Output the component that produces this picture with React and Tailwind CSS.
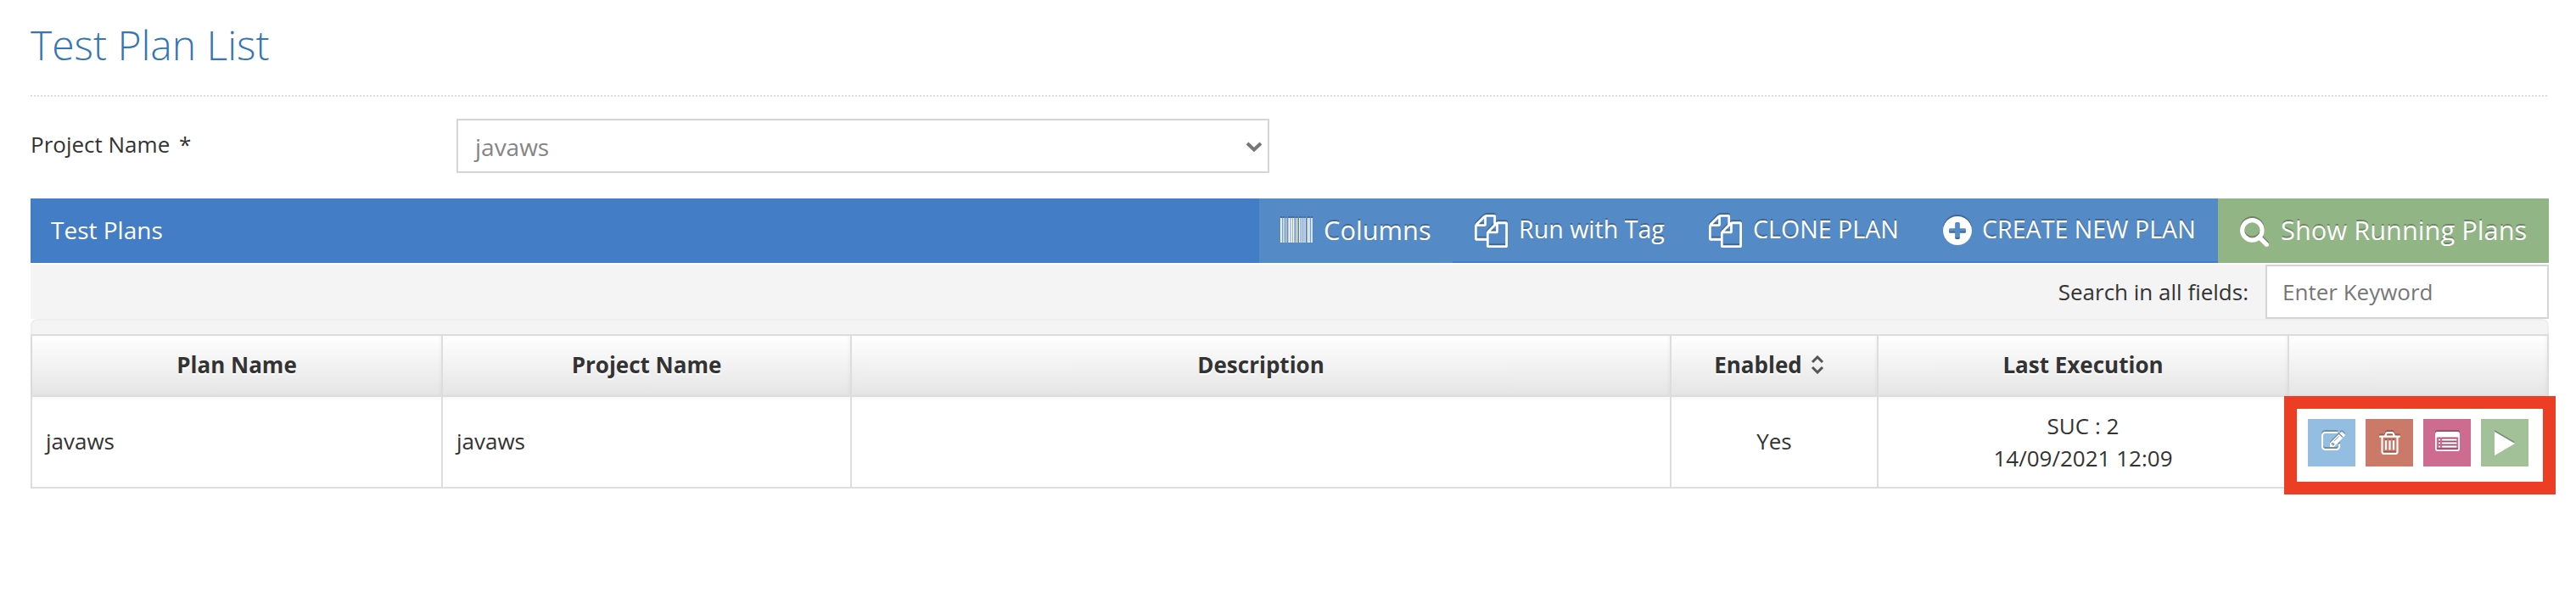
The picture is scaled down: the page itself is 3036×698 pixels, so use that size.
const COPY =
  'M1696 384q40 0 68 28t28 68v1216q0 40-28 68t-68 28h-960q-40 0-68-28t-28-68v-288h-544q-40 0-68-28t-28-68v-672q0-40 20-88t48-76l408-408q28-28 76-48t88-20h416q40 0 68 28t28 68v328q68-40 128-40h416zm-544 213l-299 299h299v-299zm-640-384l-299 299h299v-299zm196 647l316-316v-416h-384v416q0 40-28 68t-68 28h-416v640h512v-256q0-40 20-88t48-76zm956 804v-1152h-384v416q0 40-28 68t-68 28h-416v640h896z';
const PLUS =
  'M1344 960v-128q0-26-19-45t-45-19h-256v-256q0-26-19-45t-45-19h-128q-26 0-45 19t-19 45v256h-256q-26 0-45 19t-19 45v128q0 26 19 45t45 19h256v256q0 26 19 45t45 19h128q26 0 45-19t19-45v-256h256q26 0 45-19t19-45zm320-64q0 209-103 385.5t-279.5 279.5-385.5 103-385.5-103-279.5-279.5-103-385.5 103-385.5 279.5-279.5 385.5-103 385.5 103 279.5 279.5 103 385.5z';
const SEARCH =
  'M1216 832q0-185-131.5-316.5t-316.5-131.5-316.5 131.5-131.5 316.5 131.5 316.5 316.5 131.5 316.5-131.5 131.5-316.5zm512 832q0 52-38 90t-90 38q-54 0-90-38l-343-342q-179 124-399 124-143 0-273.5-55.5t-225-150-150-225-55.5-273.5 55.5-273.5 150-225 225-150 273.5-55.5 273.5 55.5 225 150 150 225 55.5 273.5q0 220-124 399l343 343q37 37 37 90z';
const TRASH =
  'M704 736v576q0 14-9 23t-23 9h-64q-14 0-23-9t-9-23v-576q0-14 9-23t23-9h64q14 0 23 9t9 23zm256 0v576q0 14-9 23t-23 9h-64q-14 0-23-9t-9-23v-576q0-14 9-23t23-9h64q14 0 23 9t9 23zm256 0v576q0 14-9 23t-23 9h-64q-14 0-23-9t-9-23v-576q0-14 9-23t23-9h64q14 0 23 9t9 23zm128 724v-948h-896v948q0 22 7 40.5t14.5 27 10.5 8.5h832q3 0 10.5-8.5t14.5-27 7-40.5zm-672-1076h448l-48-117q-7-9-17-11h-317q-10 2-17 11zm928 32v64q0 14-9 23t-23 9h-96v948q0 83-47 143.5t-113 60.5h-832q-66 0-113-58.5t-47-141.5v-952h-96q-14 0-23-9t-9-23v-64q0-14 9-23t23-9h309l70-167q15-37 54-63t79-26h320q40 0 79 26t54 63l70 167h309q14 0 23 9t9 23z';
const EDIT =
  'M888 1184l116-116-152-152-116 116v56h96v96h56zm440-720q-16-16-33 1l-350 350q-17 17-1 33t33-1l350-350q17-17 1-33zm80 594v190q0 119-84.5 203.5t-203.5 84.5h-832q-119 0-203.5-84.5t-84.5-203.5v-832q0-119 84.5-203.5t203.5-84.5h832q63 0 117 25 15 7 18 23 3 17-9 29l-49 49q-14 14-32 8-23-6-45-6h-832q-66 0-113 47t-47 113v832q0 66 47 113t113 47h832q66 0 113-47t47-113v-126q0-13 9-22l64-64q15-15 35-7t20 29zm-96-738l288 288-672 672h-288v-288zm444 132l-92 92-288-288 92-92q28-28 68-28t68 28l152 152q28 28 28 68t-28 68z';

const SHADOW = 'drop-shadow-[0_-2px_0_rgba(0,0,0,0.25)]';

function Glyph({ d, box = '0 0 1792 1792', className }) {
  return (
    <svg viewBox={box} fill="currentColor" className={`block shrink-0 overflow-visible ${SHADOW} ${className}`}>
      <path d={d} />
    </svg>
  );
}

const BARS = [
  [0, 1.8], [2.8, 1.1], [4.8, 1], [7, 0.7], [9.4, 2.2], [12.4, 1.6], [14.6, 1.4], [16.6, 0.9],
  [18.8, 1.5], [22, 1.4], [24.2, 1.1], [26.3, 1.2], [28.4, 1.3], [31.8, 1.9], [34.2, 1], [36.2, 1.6],
];

function Barcode({ className }) {
  return (
    <svg viewBox="0 0 38 29" fill="currentColor" className={`block shrink-0 overflow-visible ${SHADOW} ${className}`}>
      {BARS.map(([x, w]) => (
        <rect key={x} x={x} y="0" width={w} height="29" />
      ))}
    </svg>
  );
}

function ListAlt({ className }) {
  return (
    <svg viewBox="0 0 29 23" className={`block shrink-0 overflow-visible ${SHADOW} ${className}`}>
      <rect x="0.9" y="0.9" width="27.2" height="21.2" rx="2" fill="none" stroke="currentColor" strokeWidth="1.8" />
      <g fill="currentColor">
        <rect x="1" y="1" width="27" height="5.5" />
        {[8.6, 12.6, 16.6].map((y) => (
          <g key={y}>
            <rect x="4" y={y} width="2" height="1.8" rx="0.4" />
            <rect x="8" y={y} width="17.4" height="1.8" rx="0.4" />
          </g>
        ))}
      </g>
    </svg>
  );
}

function HeadCell({ children }) {
  return (
    <div className="flex items-center justify-center border-r-2 border-[#dddddd] pb-0.5 shadow-[inset_-2px_0_3px_rgba(0,0,0,0.03)] [text-shadow:0_2px_0_#fff]">
      {children}
    </div>
  );
}

function Cell({ children, className = 'pb-0.5' }) {
  return <div className={`flex items-center border-r-2 border-[#dddddd] ${className}`}>{children}</div>;
}

const COLS = 'grid grid-cols-[484px_482px_966px_244px_484px_306px]';

export default function App() {
  return (
    <div className="h-[698px] w-[3036px] overflow-hidden bg-white pr-8 pl-9 font-['Open_Sans',sans-serif] text-[26px] text-[#333333]">
      <h1 className="h-[112px] pt-5 text-[48px] leading-[66px] font-light text-[#3576b5]">Test Plan List</h1>
      <div className="h-0.5 bg-[repeating-linear-gradient(90deg,#dcdcdc_0_2px,transparent_2px_4px)]" />

      <div className="flex h-[120px] pt-[26px]">
        <div className="w-[502px] pt-2.5 leading-[40px]">
          Project Name <span className="ml-1">*</span>
        </div>
        <div className="flex h-16 w-[958px] items-center justify-between border-2 border-[#d5d5d5] pr-1.5 pl-5 text-[28px] text-[#858585]">
          <span className="pt-0.5">javaws</span>
          <svg viewBox="0 0 20 12" className="mt-0.5 h-3 w-5">
            <path d="M2 2l8 7.5L18 2" fill="none" stroke="#777" strokeWidth="4" />
          </svg>
        </div>
      </div>

      <div className="flex h-[76px] bg-[#437dc6] text-[28px] text-white">
        <div className="w-[1448px] pt-[13px] pl-6 leading-[48px]">Test Plans</div>
        <div className="flex w-[228px] bg-[#548ac6] pl-[25px] [text-shadow:0_-2px_0_rgba(0,0,0,0.25)]">
          <Barcode className="mt-[23px] h-[29px] w-[38px]" />
          <span className="ml-[13px] pt-[13px] text-[30.8px] leading-[48px]">Columns</span>
        </div>
        <div className="flex h-[74px] w-[902px] bg-[#548ac6] text-[28.6px] [text-shadow:0_-2px_0_rgba(0,0,0,0.25)]">
          <div className="flex w-[276px] pl-[26px]">
            <Glyph d={COPY} className="mt-[19px] size-[39px]" />
            <span className="ml-[13px] pt-3 leading-[48px] whitespace-nowrap">Run with Tag</span>
          </div>
          <div className="flex w-[274px] pl-[26px]">
            <Glyph d={COPY} className="mt-[19px] size-[39px]" />
            <span className="ml-[13px] pt-3 leading-[48px] whitespace-nowrap">CLONE PLAN</span>
          </div>
          <div className="flex pl-[28px]">
            <Glyph d={PLUS} box="128 128 1536 1536" className="mt-[21px] size-[34px]" />
            <span className="ml-3 pt-3 leading-[48px] whitespace-nowrap">CREATE NEW PLAN</span>
          </div>
        </div>
        <div className="flex w-[390px] bg-[#92b586] pl-[26px] [text-shadow:0_-2px_0_rgba(0,0,0,0.25)]">
          <Glyph d={SEARCH} box="64 128 1664 1664" className="mt-[23px] size-[34px]" />
          <span className="ml-3.5 pt-[13px] text-[30.8px] leading-[48px] whitespace-nowrap">Show Running Plans</span>
        </div>
      </div>

      <div className="mt-0.5 flex h-16 items-center justify-end bg-[#f4f4f4]">
        <span className="mr-5">Search in all fields:</span>
        <div className="flex h-16 w-[334px] items-center border-2 border-[#d5d5d5] bg-white pl-[18px] text-[#777777]">
          Enter Keyword
        </div>
      </div>
      <div className="h-[18px] rounded-t-[8px] border-2 border-b-0 border-[#eeeeee] bg-[#f4f4f4]" />

      <div className="relative h-[182px] border-y-2 border-l-2 border-[#dddddd]">
        <div
          className={`${COLS} h-[72px] border-b-2 border-[#dddddd] bg-linear-to-b from-white to-[#e5e5e5] font-bold shadow-[0_2px_4px_rgba(0,0,0,0.04)]`}
        >
          <HeadCell>Plan Name</HeadCell>
          <HeadCell>Project Name</HeadCell>
          <HeadCell>Description</HeadCell>
          <HeadCell>
            Enabled
            <svg viewBox="0 0 16 22" className="mr-3 ml-2.5 h-[22px] w-4">
              <path d="M2 8l6-6 6 6M2 14l6 6 6-6" fill="none" stroke="#555" strokeWidth="3" />
            </svg>
          </HeadCell>
          <HeadCell>Last Execution</HeadCell>
          <HeadCell />
        </div>
        <div className={`${COLS} h-[106px]`}>
          <Cell className="pb-0.5 pl-4">javaws</Cell>
          <Cell className="pb-0.5 pl-4">javaws</Cell>
          <Cell />
          <Cell className="justify-center pb-0.5">Yes</Cell>
          <Cell className="justify-center text-center leading-[38px]">
            <div>
              <div>SUC : 2</div>
              <div>14/09/2021 12:09</div>
            </div>
          </Cell>
          <Cell />
        </div>
        <div className="absolute top-[71px] left-[2654px] flex h-[116px] w-[320px] gap-3 border-[15px] border-[#ec3e25] bg-white pt-3 pl-[13px] text-white">
          <div className="size-14 bg-[#93bee2] pt-[15px] pl-4">
            <Glyph d={EDIT} box="0 128 1792 1536" className="h-6 w-7" />
          </div>
          <div className="size-14 bg-[#cb7a6a] pt-[15px] pl-4">
            <Glyph d={TRASH} box="192 128 1408 1536" className="h-[27px] w-[25px]" />
          </div>
          <div className="size-14 bg-[#ce6c90] pt-[15px] pl-[14px]">
            <ListAlt className="h-[23px] w-[29px]" />
          </div>
          <div className="size-14 bg-[#a2c199] pt-[15px] pl-4">
            <Glyph d="M0 0L24 14 0 28z" box="0 0 24 28" className="h-7 w-6" />
          </div>
        </div>
      </div>
    </div>
  );
}
